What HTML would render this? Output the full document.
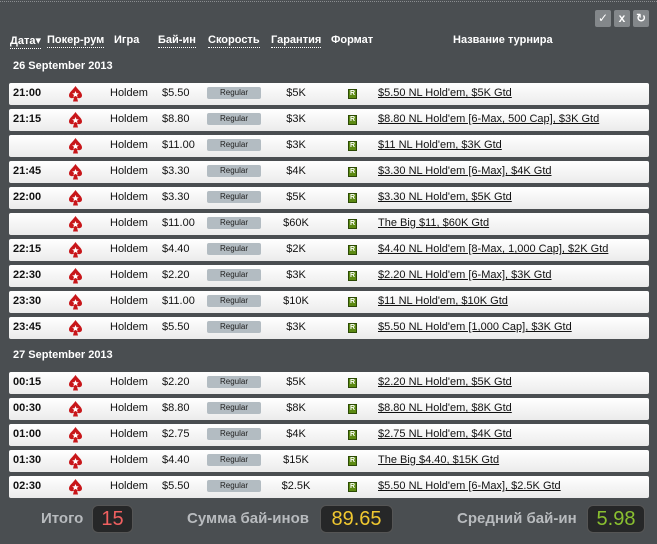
<!DOCTYPE html>
<html><head><meta charset="utf-8"><style>
*{margin:0;padding:0;box-sizing:border-box}
body{width:657px;height:544px;background:#4a4e51;font-family:"Liberation Sans","DejaVu Sans",sans-serif;font-size:11px;position:relative;overflow:hidden}
.top{position:absolute;left:0;top:1px;width:657px;border-top:1px dotted #8a8d90}
.btn{position:absolute;top:10px;width:16px;height:17px;background:#83878a;color:#fff;font-weight:bold;font-size:12px;text-align:center;line-height:17px;border-radius:2px}
.h{position:absolute;top:34px;color:#fff;font-weight:bold;font-size:11px}
.u{border-bottom:1px dotted #fff;padding-bottom:1px}
.d{position:absolute;left:13px;color:#fff;font-weight:bold;font-size:11px}
.r{position:absolute;left:9px;width:640px;height:22px;background:linear-gradient(#fff,#ebebeb);border-radius:2px}
.r span{position:absolute;top:4px;color:#111;font-size:11px;white-space:nowrap}
.t{left:4px;font-weight:bold}
.sp{left:59px;top:3px!important;width:15px;height:16px}
.g{left:101px;color:#222}
.b{left:153px}
.reg{left:198px;top:4px!important;width:54px;height:12px;background:#b3bcc2;border-radius:2px;font-size:8px!important;text-align:center;line-height:12px;color:#222!important}
.gu{left:262px;width:50px;text-align:center}
.f{left:339px;top:6px!important;width:9px;height:10px;background:#5c8a12;border:1px solid #2c4a05;color:#fff!important;font-size:7px!important;font-weight:bold;text-align:center;line-height:8px}
.n{left:369px;text-decoration:underline;color:#222}
.ft{position:absolute;top:510px;color:#b8bbbe;font-weight:bold;font-size:15px}
.box{position:absolute;top:505px;height:28px;background:#262728;border:1px solid #555;border-radius:6px;font-size:20px;text-align:center;line-height:27px}
</style></head><body>
<div class="top"></div>
<div class="btn" style="left:595px">✓</div>
<div class="btn" style="left:614px">x</div>
<div class="btn" style="left:633px">↻</div>
<div class="h u" style="left:10px">Дата▾</div>
<div class="h u" style="left:47px">Покер-рум</div>
<div class="h" style="left:114px">Игра</div>
<div class="h u" style="left:158px">Бай-ин</div>
<div class="h u" style="left:208px">Скорость</div>
<div class="h u" style="left:271px">Гарантия</div>
<div class="h" style="left:331px">Формат</div>
<div class="h" style="left:453px">Название турнира</div>
<div class="d" style="top:60px">26 September 2013</div>
<svg width="0" height="0" style="position:absolute"><defs><symbol id="s" viewBox="0 0 15 16"><path d="M7.5 0C5 4 1 6 1 9.5 1 12 4 13 6 11.5L5 15.5H10L9 11.5C11 13 14 12 14 9.5 14 6 10 4 7.5 0Z" fill="#c8161a"/><path d="M7.5 5l1 2.3 2.3.1-1.8 1.5.6 2.3-2.1-1.3-2.1 1.3.6-2.3-1.8-1.5 2.3-.1z" fill="#fff"/></symbol></defs></svg>

<div class="r" style="top:83px"><span class="t">21:00</span><svg class="sp" style="position:absolute;left:59px;top:3px" width="15" height="16"><use href="#s"/></svg><span class="g">Holdem</span><span class="b">$5.50</span><span class="reg">Regular</span><span class="gu">$5K</span><span class="f">R</span><span class="n">$5.50 NL Hold'em, $5K Gtd</span></div>
<div class="r" style="top:109px"><span class="t">21:15</span><svg style="position:absolute;left:59px;top:3px" width="15" height="16"><use href="#s"/></svg><span class="g">Holdem</span><span class="b">$8.80</span><span class="reg">Regular</span><span class="gu">$3K</span><span class="f">R</span><span class="n">$8.80 NL Hold'em [6-Max, 500 Cap], $3K Gtd</span></div>
<div class="r" style="top:135px"><span class="t"></span><svg style="position:absolute;left:59px;top:3px" width="15" height="16"><use href="#s"/></svg><span class="g">Holdem</span><span class="b">$11.00</span><span class="reg">Regular</span><span class="gu">$3K</span><span class="f">R</span><span class="n">$11 NL Hold'em, $3K Gtd</span></div>
<div class="r" style="top:161px"><span class="t">21:45</span><svg style="position:absolute;left:59px;top:3px" width="15" height="16"><use href="#s"/></svg><span class="g">Holdem</span><span class="b">$3.30</span><span class="reg">Regular</span><span class="gu">$4K</span><span class="f">R</span><span class="n">$3.30 NL Hold'em [6-Max], $4K Gtd</span></div>
<div class="r" style="top:187px"><span class="t">22:00</span><svg style="position:absolute;left:59px;top:3px" width="15" height="16"><use href="#s"/></svg><span class="g">Holdem</span><span class="b">$3.30</span><span class="reg">Regular</span><span class="gu">$5K</span><span class="f">R</span><span class="n">$3.30 NL Hold'em, $5K Gtd</span></div>
<div class="r" style="top:213px"><span class="t"></span><svg style="position:absolute;left:59px;top:3px" width="15" height="16"><use href="#s"/></svg><span class="g">Holdem</span><span class="b">$11.00</span><span class="reg">Regular</span><span class="gu">$60K</span><span class="f">R</span><span class="n">The Big $11, $60K Gtd</span></div>
<div class="r" style="top:239px"><span class="t">22:15</span><svg style="position:absolute;left:59px;top:3px" width="15" height="16"><use href="#s"/></svg><span class="g">Holdem</span><span class="b">$4.40</span><span class="reg">Regular</span><span class="gu">$2K</span><span class="f">R</span><span class="n">$4.40 NL Hold'em [8-Max, 1,000 Cap], $2K Gtd</span></div>
<div class="r" style="top:265px"><span class="t">22:30</span><svg style="position:absolute;left:59px;top:3px" width="15" height="16"><use href="#s"/></svg><span class="g">Holdem</span><span class="b">$2.20</span><span class="reg">Regular</span><span class="gu">$3K</span><span class="f">R</span><span class="n">$2.20 NL Hold'em [6-Max], $3K Gtd</span></div>
<div class="r" style="top:291px"><span class="t">23:30</span><svg style="position:absolute;left:59px;top:3px" width="15" height="16"><use href="#s"/></svg><span class="g">Holdem</span><span class="b">$11.00</span><span class="reg">Regular</span><span class="gu">$10K</span><span class="f">R</span><span class="n">$11 NL Hold'em, $10K Gtd</span></div>
<div class="r" style="top:317px"><span class="t">23:45</span><svg style="position:absolute;left:59px;top:3px" width="15" height="16"><use href="#s"/></svg><span class="g">Holdem</span><span class="b">$5.50</span><span class="reg">Regular</span><span class="gu">$3K</span><span class="f">R</span><span class="n">$5.50 NL Hold'em [1,000 Cap], $3K Gtd</span></div>

<div class="d" style="top:349px">27 September 2013</div>
<div class="r" style="top:372px"><span class="t">00:15</span><svg style="position:absolute;left:59px;top:3px" width="15" height="16"><use href="#s"/></svg><span class="g">Holdem</span><span class="b">$2.20</span><span class="reg">Regular</span><span class="gu">$5K</span><span class="f">R</span><span class="n">$2.20 NL Hold'em, $5K Gtd</span></div>
<div class="r" style="top:398px"><span class="t">00:30</span><svg style="position:absolute;left:59px;top:3px" width="15" height="16"><use href="#s"/></svg><span class="g">Holdem</span><span class="b">$8.80</span><span class="reg">Regular</span><span class="gu">$8K</span><span class="f">R</span><span class="n">$8.80 NL Hold'em, $8K Gtd</span></div>
<div class="r" style="top:424px"><span class="t">01:00</span><svg style="position:absolute;left:59px;top:3px" width="15" height="16"><use href="#s"/></svg><span class="g">Holdem</span><span class="b">$2.75</span><span class="reg">Regular</span><span class="gu">$4K</span><span class="f">R</span><span class="n">$2.75 NL Hold'em, $4K Gtd</span></div>
<div class="r" style="top:450px"><span class="t">01:30</span><svg style="position:absolute;left:59px;top:3px" width="15" height="16"><use href="#s"/></svg><span class="g">Holdem</span><span class="b">$4.40</span><span class="reg">Regular</span><span class="gu">$15K</span><span class="f">R</span><span class="n">The Big $4.40, $15K Gtd</span></div>
<div class="r" style="top:476px"><span class="t">02:30</span><svg style="position:absolute;left:59px;top:3px" width="15" height="16"><use href="#s"/></svg><span class="g">Holdem</span><span class="b">$5.50</span><span class="reg">Regular</span><span class="gu">$2.5K</span><span class="f">R</span><span class="n">$5.50 NL Hold'em [6-Max], $2.5K Gtd</span></div>

<div class="ft" style="left:41px">Итого</div>
<div class="box" style="left:92px;width:41px;color:#f06060">15</div>
<div class="ft" style="left:187px">Сумма бай-инов</div>
<div class="box" style="left:320px;width:73px;color:#f0c830">89.65</div>
<div class="ft" style="left:457px">Средний бай-ин</div>
<div class="box" style="left:587px;width:58px;color:#8ac030">5.98</div>
</body></html>
